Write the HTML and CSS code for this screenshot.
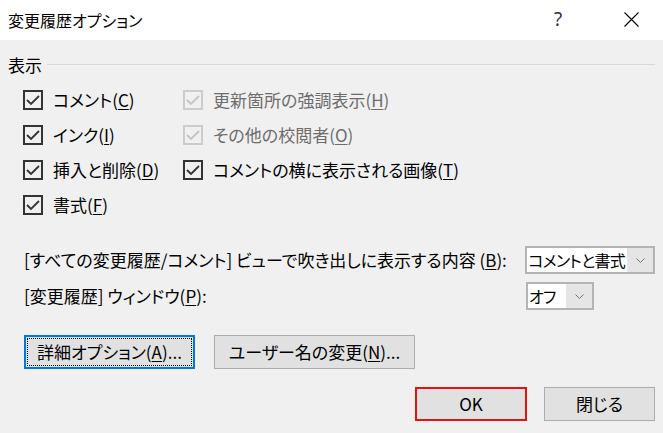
FILE: index.html
```html
<!DOCTYPE html>
<html lang="ja">
<head>
<meta charset="utf-8">
<title>変更履歴オプション</title>
<link rel="stylesheet" href="styles.css">
</head>
<body>
<div class="dialog">
  <div class="titlebar">
    <span class="title">変更履歴オプション</span>
    <span class="help">?</span>
    <span class="close">
      <svg width="15" height="15" viewBox="0 0 15 15"><path d="M0.5 0.5 L14.5 14.5 M14.5 0.5 L0.5 14.5" stroke="#000" stroke-width="1.1" fill="none"/></svg>
    </span>
  </div>
  <div class="content">
    <div class="group-head"><span class="group-label">表示</span><span class="rule"></span></div>
    <div class="checks">
      <label class="chk"><span class="box"><svg viewBox="0 0 20 20"><path d="M4 10 L8 14 L16 6"/></svg></span><span>コメント(<u>C</u>)</span></label>
      <label class="chk disabled"><span class="box"><svg viewBox="0 0 20 20"><path d="M4 10 L8 14 L16 6"/></svg></span><span>更新箇所の強調表示(<u>H</u>)</span></label>
      <label class="chk"><span class="box"><svg viewBox="0 0 20 20"><path d="M4 10 L8 14 L16 6"/></svg></span><span>インク(<u>I</u>)</span></label>
      <label class="chk disabled"><span class="box"><svg viewBox="0 0 20 20"><path d="M4 10 L8 14 L16 6"/></svg></span><span>その他の校閲者(<u>O</u>)</span></label>
      <label class="chk"><span class="box"><svg viewBox="0 0 20 20"><path d="M4 10 L8 14 L16 6"/></svg></span><span>挿入と削除(<u>D</u>)</span></label>
      <label class="chk"><span class="box"><svg viewBox="0 0 20 20"><path d="M4 10 L8 14 L16 6"/></svg></span><span>コメントの横に表示される画像(<u>T</u>)</span></label>
      <label class="chk"><span class="box"><svg viewBox="0 0 20 20"><path d="M4 10 L8 14 L16 6"/></svg></span><span>書式(<u>F</u>)</span></label>
    </div>
    <div class="field-row">
      <span class="field-label">[すべての変更履歴/コメント] ビューで吹き出しに表示する内容 (<u>B</u>):</span>
      <span class="combo combo-wide"><span class="combo-text">コメントと書式</span><span class="combo-btn"><svg width="9" height="5" viewBox="0 0 9 5"><path d="M0.5 0.5 L4.5 4.5 L8.5 0.5"/></svg></span></span>
    </div>
    <div class="field-row second">
      <span class="field-label">[変更履歴] ウィンドウ(<u>P</u>):</span>
      <span class="combo combo-narrow"><span class="combo-text">オフ</span><span class="combo-btn"><svg width="9" height="5" viewBox="0 0 9 5"><path d="M0.5 0.5 L4.5 4.5 L8.5 0.5"/></svg></span></span>
    </div>
    <div class="btn-row">
      <button class="btn focus btn-detail">詳細オプション(<u>A</u>)...</button>
      <button class="btn btn-user">ユーザー名の変更(<u>N</u>)...</button>
    </div>
    <div class="footer">
      <button class="btn btn-ok">OK</button>
      <button class="btn btn-close">閉じる</button>
    </div>
  </div>
</div>
</body>
</html>
```
FILE: styles.css
```css
* { box-sizing: border-box; }
html, body {
  margin: 0;
  padding: 0;
  width: 663px;
  height: 433px;
  overflow: hidden;
  background: #f0f0f0;
}
body {
  font-family: "Noto Sans CJK JP", "Noto Sans", sans-serif;
  font-size: 17px;
  color: #000;
  font-feature-settings: "palt";
}
.dialog { width: 663px; height: 433px; }
.titlebar {
  height: 40px;
  background: #fff;
  display: flex;
  align-items: center;
  padding-left: 8px;
}
.title { font-size: 16px; line-height: 18px; flex: 1; margin-top: -1px; }
.help {
  width: 14px;
  text-align: center;
  font-family: "Noto Sans", sans-serif;
  font-size: 19px;
  line-height: 20px;
  color: #333;
  margin-right: 59px;
  margin-top: -2px;
}
.close { width: 15px; height: 15px; margin-right: 24px; margin-top: -2px; display: flex; }
.content { padding: 15px 8px 0 8px; }
.group-head {
  height: 20px;
  display: flex;
  align-items: center;
}
.group-label { line-height: 20px; margin-right: 5px; }
.rule { flex: 1; height: 1px; background: #d9d9d9; margin-top: -1px; }
.checks {
  margin-top: 7px;
  margin-left: 15px;
  display: grid;
  grid-template-columns: 160px 1fr;
  grid-auto-rows: 35px;
}
.chk {
  display: flex;
  align-items: center;
  line-height: 20px;
  white-space: nowrap;
}
.box {
  width: 20px;
  height: 20px;
  border: 2px solid #333;
  margin-right: 10px;
  display: flex;
  align-items: center;
  justify-content: center;
  flex: none;
}
.box svg { width: 20px; height: 20px; flex: none; }
.box path { fill: none; stroke: #333; stroke-width: 1.8; }
.chk.disabled { color: #6d6d6d; }
.chk.disabled .box { border-color: #cccccc; }
.chk.disabled .box path { stroke: #c4c4c4; }
u { text-decoration: underline; text-underline-offset: 2px; text-decoration-thickness: 1px; }
.field-row {
  margin-top: 24px;
  margin-left: 16px;
  display: flex;
  align-items: center;
  height: 28px;
}
.field-row.second { margin-top: 8px; }
.field-label { width: 502px; line-height: 20px; white-space: nowrap; }
.combo {
  height: 28px;
  border: 2px solid #b4b4b4;
  display: flex;
  background: #fff;
}
.combo-wide { width: 130px; }
.combo-narrow { width: 68px; }
.combo-text {
  flex: 1;
  overflow: hidden;
  white-space: nowrap;
  font-size: 16px;
  letter-spacing: -0.7px;
  line-height: 24px;
  padding-left: 1px;
}
.combo-btn {
  width: 26px;
  background: #e5e5e5;
  display: flex;
  align-items: center;
  justify-content: center;
  flex: none;
}
.combo-btn path { fill: none; stroke: #707070; stroke-width: 1; }
.btn-row {
  margin-top: 25px;
  margin-left: 16px;
  display: flex;
  gap: 19px;
}
.btn {
  font-family: inherit;
  font-size: 17px;
  font-feature-settings: "palt";
  color: #000;
  height: 34px;
  background: #e1e1e1;
  border: 1px solid #adadad;
  padding: 0;
  line-height: 20px;
  white-space: nowrap;
}
.btn.focus {
  border: 2px solid #0078d7;
  outline: 1px dotted #000;
  outline-offset: -4px;
}
.btn-detail { width: 171px; }
.btn-user { width: 201px; }
.footer {
  margin-top: 18px;
  display: flex;
  justify-content: flex-end;
  gap: 17px;
}
.btn-ok { width: 112px; border: 2px solid #e81010; }
.btn-close { width: 111px; }
```
